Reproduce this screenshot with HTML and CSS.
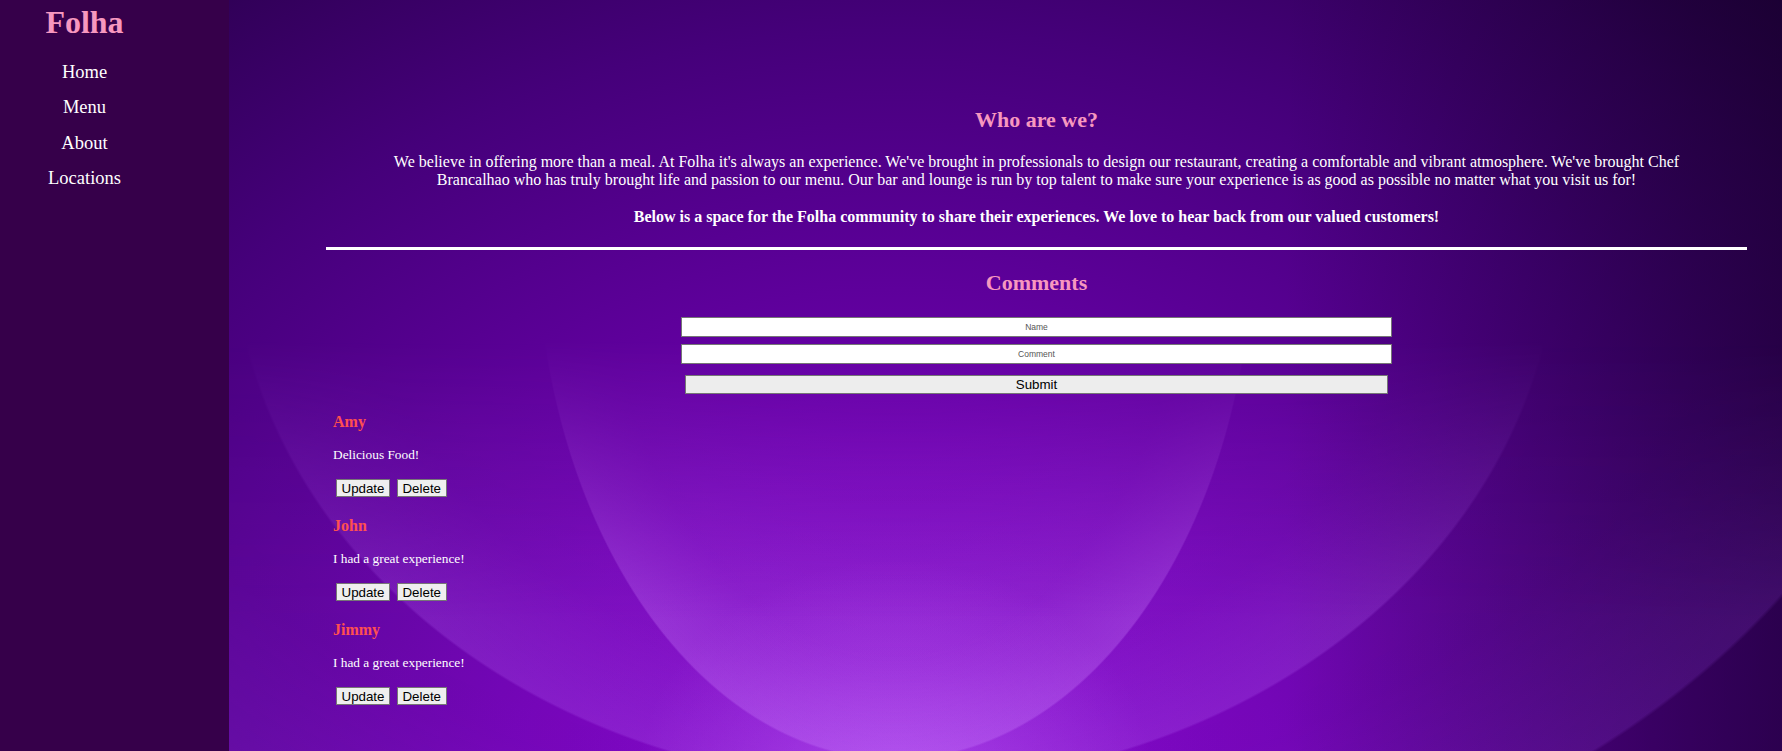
FILE: index.html
```html
<!DOCTYPE html>
<html lang="en">
<head>
<meta charset="utf-8">
<title>Folha</title>
<link rel="stylesheet" href="styles.css">
</head>
<body>
<aside class="sidebar">
  <h1 class="logo">Folha</h1>
  <nav class="nav">
    <a class="nav-link" href="#">Home</a>
    <a class="nav-link" href="#">Menu</a>
    <a class="nav-link" href="#">About</a>
    <a class="nav-link" href="#">Locations</a>
  </nav>
</aside>
<main class="main">
  <div class="content">
    <section class="about">
      <h2 class="title">Who are we?</h2>
      <p class="lead">We believe in offering more than a meal. At Folha it's always an experience. We've brought in professionals to design our restaurant, creating a comfortable and vibrant atmosphere. We've brought Chef Brancalhao who has truly brought life and passion to our menu. Our bar and lounge is run by top talent to make sure your experience is as good as possible no matter what you visit us for!</p>
      <p class="lead lead-strong">Below is a space for the Folha community to share their experiences. We love to hear back from our valued customers!</p>
    </section>
    <div class="rule"></div>
    <section class="comments">
      <h2 class="title">Comments</h2>
      <form class="form">
        <input class="field" type="text" placeholder="Name">
        <input class="field field-comment" type="text" placeholder="Comment">
        <button class="submit" type="button">Submit</button>
      </form>
      <ul class="list">
        <li class="item">
          <h3 class="author">Amy</h3>
          <p class="text">Delicious Food!</p>
          <div class="actions"><button class="btn" type="button">Update</button><button class="btn" type="button">Delete</button></div>
        </li>
        <li class="item">
          <h3 class="author">John</h3>
          <p class="text">I had a great experience!</p>
          <div class="actions"><button class="btn" type="button">Update</button><button class="btn" type="button">Delete</button></div>
        </li>
        <li class="item">
          <h3 class="author">Jimmy</h3>
          <p class="text">I had a great experience!</p>
          <div class="actions"><button class="btn" type="button">Update</button><button class="btn" type="button">Delete</button></div>
        </li>
      </ul>
    </section>
  </div>
</main>
</body>
</html>
```

FILE: styles.css
```css
html, body {
  margin: 0;
  padding: 0;
  height: 100%;
}

body {
  display: flex;
  height: 100vh;
  overflow: hidden;
  font-family: "Liberation Serif", "Times New Roman", serif;
  color: #fff;
  background: #36004a;
}

.sidebar {
  width: 229px;
  flex: 0 0 229px;
  box-sizing: border-box;
  padding: 4px 60px 0 0;
  background: #36004a;
  display: flex;
  flex-direction: column;
  align-items: center;
}

.logo {
  margin: 0;
  font-size: 32px;
  line-height: 37px;
  font-weight: bold;
  color: #f797bf;
}

.nav {
  margin-top: 19.5px;
  display: flex;
  flex-direction: column;
  align-items: center;
  gap: 13.5px;
}

.nav-link {
  font-size: 18.5px;
  line-height: 22px;
  color: #fff;
  text-decoration: none;
}

.main {
  flex: 1;
  position: relative;
  isolation: isolate;
  overflow: hidden;
  background:
    radial-gradient(ellipse 260px 230px at 666px 790px, rgba(185, 95, 240, 0.5) 0%, rgba(185, 95, 240, 0) 100%),
    linear-gradient(to left, rgba(22, 0, 42, 0.55) 0%, rgba(22, 0, 42, 0) 32%),
    radial-gradient(ellipse 1300px 1100px at 666px 800px, #8a08d0 0%, #7000b2 30%, #5a0096 50%, #45007a 70%, #32005a 88%, #22003f 100%);
}

.main::before {
  content: "";
  position: absolute;
  inset: 0;
  z-index: -1;
  background:
    radial-gradient(ellipse 360px 532px at 666px 230px, rgba(205, 130, 255, 0.08) 0%, rgba(205, 130, 255, 0.16) 80%, rgba(205, 130, 255, 0.30) 99.3%, rgba(205, 130, 255, 0) 99.7%),
    radial-gradient(ellipse 666px 557px at 666px 230px, rgba(190, 110, 255, 0.05) 0%, rgba(190, 110, 255, 0.10) 80%, rgba(190, 110, 255, 0.22) 99.3%, rgba(190, 110, 255, 0) 99.7%),
    radial-gradient(ellipse 1042px 709px at 666px 230px, rgba(170, 80, 255, 0.04) 0%, rgba(170, 80, 255, 0.08) 80%, rgba(170, 80, 255, 0.17) 99.3%, rgba(170, 80, 255, 0) 99.7%);
  -webkit-mask-image: linear-gradient(to bottom, transparent 340px, #000 620px);
  mask-image: linear-gradient(to bottom, transparent 340px, #000 620px);
}

.content {
  margin: 0 35px 0 97px;
  padding-top: 107px;
}

.about {
  text-align: center;
}

.title {
  margin: 0;
  font-size: 22px;
  line-height: 26px;
  font-weight: bold;
  color: #f797bf;
  text-align: center;
}

.lead {
  max-width: 1320px;
  margin: 20px auto 0;
  font-size: 16px;
  line-height: 18px;
}

.lead-strong {
  margin-top: 19px;
  font-weight: bold;
}

.rule {
  margin-top: 21px;
  height: 3px;
  background: #fff;
}

.comments .title {
  margin-top: 20px;
}

.form {
  width: 50%;
  margin: 21px auto 0;
  display: flex;
  flex-direction: column;
}

.field {
  box-sizing: border-box;
  width: 100%;
  height: 20px;
  margin: 0;
  padding: 0 4px;
  border: 1px solid #767676;
  background: #fff;
  font-family: "Liberation Sans", Arial, sans-serif;
  font-size: 8.5px;
  text-align: center;
  color: #000;
  outline: none;
}

.field::placeholder {
  color: #555;
}

.field-comment {
  margin-top: 7px;
}

.submit {
  box-sizing: border-box;
  margin: 11px 4px 0;
  height: 19px;
  padding: 0;
  border: 1px solid #767676;
  border-radius: 0;
  background: #ededed;
  font-family: "Liberation Sans", Arial, sans-serif;
  font-size: 13.333px;
  line-height: 15px;
  color: #000;
}

.list {
  list-style: none;
  margin: 18px 0 0;
  padding: 0 0 0 7px;
}

.item {
  margin-bottom: 19px;
}

.author {
  margin: 0;
  font-size: 16px;
  line-height: 19px;
  font-weight: bold;
  color: #ff5050;
}

.text {
  margin: 16px 0 0;
  font-size: 13.333px;
  line-height: 16px;
  color: #fff;
}

.actions {
  margin-top: 16px;
  padding-left: 3px;
  display: flex;
  gap: 7px;
}

.btn {
  box-sizing: border-box;
  height: 18px;
  margin: 0;
  padding: 0 4.5px;
  border: 1px solid #767676;
  border-radius: 0;
  background: #efefef;
  font-family: "Liberation Sans", Arial, sans-serif;
  font-size: 13.333px;
  line-height: 15px;
  color: #000;
}
```
